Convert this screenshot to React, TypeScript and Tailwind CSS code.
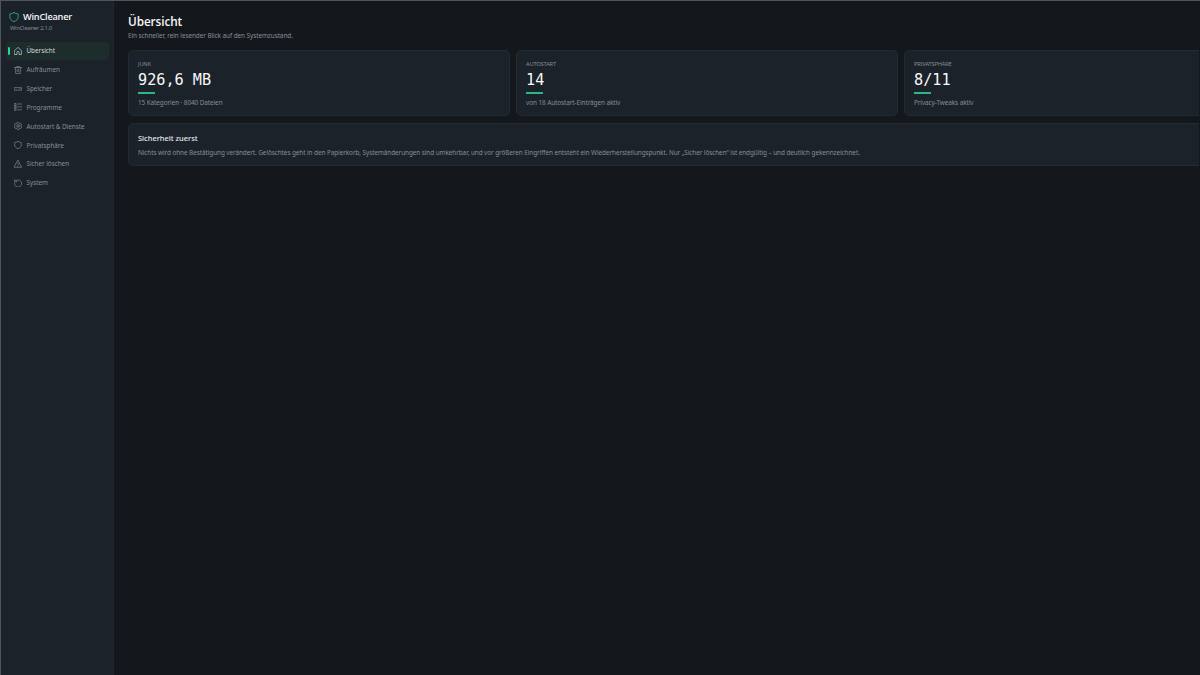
import React from 'react';

type IconProps = { children: React.ReactNode; className?: string };

function Icon({ children, className = 'size-[8px]' }: IconProps) {
  return (
    <svg
      viewBox="0 0 16 16"
      className={`${className} shrink-0`}
      fill="none"
      stroke="currentColor"
      strokeWidth="1.3"
      strokeLinejoin="round"
      strokeLinecap="round"
    >
      {children}
    </svg>
  );
}

const shield = <path d="M8 .8C10 2.200 12 2.800 14.600 3v5c0 3.600-2.800 6-6.600 7.400C4.200 14 1.400 11.600 1.400 8V3C4 2.800 6 2.200 8 .8Z" />;

const items = [
  {
    label: 'Übersicht',
    icon: <path d="M1.200 7 8 .8 14.800 7v8H10v-4.500a2 2 0 0 0-4 0V15H1.200Z" />,
  },
  {
    label: 'Aufräumen',
    icon: <path d="M.8 3h14.400M5.500 3V.8h5V3M2.500 3l1 12.200h9L13.500 3M6.500 6.500v5M9.500 6.500v5" />,
  },
  { label: 'Speicher', icon: <path d="M.8 5.300h14.400v5H.8ZM11.500 7.800h1.200" /> },
  {
    label: 'Programme',
    icon: <path d="M1.200 1h2.600v13.600H1.200zM1.200 5.500h2.600M1.200 10h2.600M6.500 2h8.700M6.500 7.800h8.700M6.500 13.600h8.700" />,
  },
  {
    label: 'Autostart & Dienste',
    icon: (
      <>
        <path d="m6.500.8-.5 2-2 1-2-.5L.7 5.700 2.200 8 .7 10.300 2 12.700l2-.5 2 1 .5 2h3l.5-2 2-1 2 .5 1.300-2.400L13.800 8l1.500-2.300L14 3.300l-2 .5-2-1-.5-2Z" />
        <circle cx="8" cy="8" r="2.500" />
      </>
    ),
  },
  { label: 'Privatsphäre', icon: shield },
  {
    label: 'Sicher löschen',
    icon: <path d="M8 .8 15.400 14.500H.6ZM8 6v4M8 12v.4" />,
  },
  {
    label: 'System',
    icon: <path d="M1.500 1v4.500H6M1.800 5.300A7.200 7.200 0 1 1 .8 8.500" />,
  },
];

const cards = [
  { title: 'JUNK', value: '926,6 MB', note: '15 Kategorien · 8040 Dateien' },
  { title: 'AUTOSTART', value: '14', note: 'von 18 Autostart-Einträgen aktiv' },
  { title: 'PRIVATSPHÄRE', value: '8/11', note: 'Privacy-Tweaks aktiv' },
];

export default function App() {
  return (
    <div className="flex h-[675px] w-[1200px] overflow-hidden border-t border-l border-[#50555a] bg-[#14181c] font-['Noto_Sans',sans-serif] text-[#848e97]">
      <aside className="flex w-[113px] shrink-0 flex-col border-r border-[#20272d] bg-[#1c2229] pt-[10px] pr-[4px] pl-[5px]">
        <div className="flex h-[12px] items-center gap-[4px] pl-[3px]">
          <Icon className="size-[10px] text-[#2eb886]">{shield}</Icon>
          <span className="font-['Open_Sans',sans-serif] text-[9.200px] leading-[12px] font-semibold tracking-[-0.210px] text-[#f4f6f7]">WinCleaner</span>
        </div>
        <div className="mt-[1px] pl-[4px] text-[5.700px] leading-[8px] tracking-[-0.190px] whitespace-nowrap">WinCleaner 2.1.0</div>
        <nav className="mt-[9.900px] flex flex-col gap-[0.850px]">
          {items.map((item, i) => (
            <div
              key={item.label}
              className={`flex h-[18px] items-center rounded-[3px] pl-[1.500px] ${i === 0 ? 'bg-[#1d2d2b] text-[#d5dadd]' : ''}`}
            >
              <span className={`mr-[4px] h-[8px] w-[2px] rounded-full ${i === 0 ? 'bg-[#2fd09a]' : ''}`} />
              <Icon>{item.icon}</Icon>
              <span className="ml-[5px] text-[6.400px] leading-[9px] tracking-[-0.050px] whitespace-nowrap">{item.label}</span>
            </div>
          ))}
        </nav>
      </aside>
      <main className="w-[1085px] shrink-0 overflow-hidden pt-[12px] pl-[14px]">
        <h1 className="font-['Open_Sans',sans-serif] text-[11.800px] leading-[17px] font-semibold tracking-[-0.100px] text-[#f4f6f8]">Übersicht</h1>
        <p className="mt-[1px] text-[6.400px] leading-[9px] tracking-[-0.070px]">Ein schneller, rein lesender Blick auf den Systemzustand.</p>
        <div className="mt-[10px] flex w-[1160px] gap-[6px]">
          {cards.map((card) => (
            <section
              key={card.title}
              className="h-[66px] w-[382px] shrink-0 rounded-[5px] border border-[#232b32] bg-[#1c2229] px-[9px] pt-[8px]"
            >
              <div className="pt-[1px] text-[5.700px] leading-[8px] tracking-[-0.170px]">{card.title}</div>
              <div className="mt-[3px] font-['DejaVu_Sans_Mono',monospace] text-[15.200px] leading-[18px] text-[#f6f8f9]">{card.value}</div>
              <div className="mt-[3px] h-[1.500px] w-[17px] bg-[#2bb589]" />
              <div className="mt-[4px] text-[6.400px] leading-[9px] tracking-[-0.080px]">{card.note}</div>
            </section>
          ))}
        </div>
        <section className="mt-[7px] h-[43px] w-[1160px] rounded-[5px] border border-[#232b32] bg-[#1c2229] px-[9px] pt-[10px]">
          <h2 className="text-[7.500px] leading-[9px] font-medium tracking-[-0.030px] text-[#e6eaed]">Sicherheit zuerst</h2>
          <p className="mt-[5px] text-[6.400px] leading-[9px] tracking-[-0.073px] whitespace-nowrap">
            Nichts wird ohne Bestätigung verändert. Gelöschtes geht in den Papierkorb, Systemänderungen sind umkehrbar, und vor größeren Eingriffen entsteht ein Wiederherstellungspunkt. Nur „Sicher löschen“ ist endgültig – und deutlich gekennzeichnet.
          </p>
        </section>
      </main>
    </div>
  );
}
